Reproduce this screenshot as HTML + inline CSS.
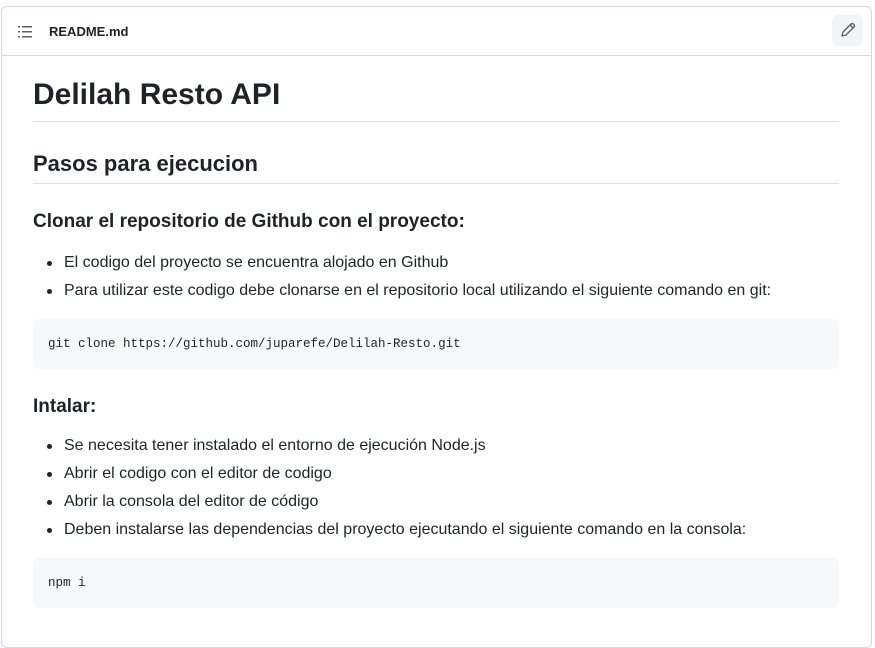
<!DOCTYPE html>
<html><head><meta charset="utf-8"><style>
body{margin:0;background:#fff;font-family:"Liberation Sans",sans-serif;color:#1f2328;width:875px;height:617px;overflow:hidden;position:relative}
.box{position:absolute;left:1px;top:6px;width:869px;height:640px;border:1px solid #d0d7de;border-radius:6px}
.hdr{height:48px;border-bottom:1px solid #d0d7de;position:relative}
.hdr .t{position:absolute;left:47px;top:17px;font-size:13px;font-weight:bold;color:#1f2328}
.ic{position:absolute;left:16px;top:18px}
.btn{position:absolute;left:830px;top:8px;width:31px;height:31px;background:#f3f4f6;border-radius:6px}
h1,h2,h3{margin:0;font-weight:bold;position:absolute;left:33px;right:36px}
h1{font-size:30px;top:78px;height:43px;border-bottom:1px solid #d8dee4}
h2{font-size:22px;top:151px;height:32px;border-bottom:1px solid #d8dee4}
h3{font-size:19px}
.li{position:absolute;left:64px;font-size:16px;white-space:nowrap}
.li:before{content:"";position:absolute;left:-17px;top:7px;width:5px;height:5px;border-radius:50%;background:#1f2328}
.code{position:absolute;left:33px;right:36px;height:50px;background:#f6f8fa;border-radius:6px;font-family:"Liberation Mono",monospace;font-size:12.5px;line-height:50px;padding-left:15px}
</style></head><body>
<div class="box"><div class="hdr">
<svg class="ic" width="16" height="14" viewBox="0 0 16 14"><g fill="#59636e"><rect x="0" y="1" width="2" height="1.5"/><rect x="0" y="6" width="2" height="1.5"/><rect x="0" y="11" width="2" height="1.5"/><rect x="4" y="1" width="10" height="1.5"/><rect x="4" y="6" width="10" height="1.5"/><rect x="4" y="11" width="10" height="1.5"/></g></svg>
<div class="t">README.md</div>
<div class="btn"><svg width="31" height="31" viewBox="0 0 31 31"><path d="M10 21 L11 17 L19 9 Q20.5 8 22 9.5 Q23 11 22 12 L14 20 Z M18 10 L21 13" fill="none" stroke="#59636e" stroke-width="1.4" stroke-linejoin="round"/></svg></div>
</div></div>
<h1>Delilah Resto API</h1>
<h2>Pasos para ejecucion</h2>
<h3 style="top:211px">Clonar el repositorio de Github con el proyecto:</h3>
<div class="li" style="top:254px">El codigo del proyecto se encuentra alojado en Github</div>
<div class="li" style="top:282px">Para utilizar este codigo debe clonarse en el repositorio local utilizando el siguiente comando en git:</div>
<div class="code" style="top:319px">git clone https://github.com/juparefe/Delilah-Resto.git</div>
<h3 style="top:396px">Intalar:</h3>
<div class="li" style="top:437px">Se necesita tener instalado el entorno de ejecución Node.js</div>
<div class="li" style="top:465px">Abrir el codigo con el editor de codigo</div>
<div class="li" style="top:493px">Abrir la consola del editor de código</div>
<div class="li" style="top:521px">Deben instalarse las dependencias del proyecto ejecutando el siguiente comando en la consola:</div>
<div class="code" style="top:558px">npm i</div>
</body></html>
